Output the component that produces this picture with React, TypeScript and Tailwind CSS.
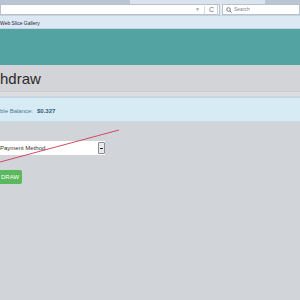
import React from 'react';

const font = { fontFamily: '"Liberation Sans", Arial, sans-serif' };

export default function App() {
  return (
    <div className="relative h-[300px] w-[300px] overflow-hidden bg-[#d1d4d8]" style={font}>
      {/* Browser chrome */}
      <div className="flex h-[4px]">
        <div className="w-[130px] bg-[#b9c5d2]" />
        <div className="flex-1 bg-[#dbe4ee]" />
        <div className="w-[35px] bg-[#b9c5d2]" />
      </div>
      <div className="flex h-[12px] border-b border-[#c7d2de] bg-[#e4ecf5]">
        <div className="flex flex-1 items-center justify-end border border-[#b8c2cc] bg-white pr-[1px]">
          <span className="text-[5px] leading-none text-[#9aa3ad]">▼</span>
          <span className="mx-[4px] h-[8px] w-px bg-[#d6dbe0]" />
          <span className="mr-[3px] text-[7px] leading-none text-[#5f7185]">C</span>
          <span className="h-[10px] w-px bg-[#c7ced6]" />
        </div>
        <div className="ml-[2px] flex w-[78px] items-center gap-[2px] border border-[#b8c2cc] bg-white pl-[3px]">
          <svg width="6" height="6" viewBox="0 0 6 6" fill="none" stroke="#6d7a88" strokeWidth="1">
            <circle cx="2.5" cy="2.5" r="1.8" />
            <path d="M3.8 3.8 L5.6 5.6" />
          </svg>
          <span className="text-[5px] leading-none text-[#7a8592]">Search</span>
        </div>
      </div>
      <div className="flex h-[13px] items-center border-b border-[#c5d3e2] bg-[#dce8f4] pt-[2px]">
        <span className="text-[5px] leading-none text-[#1e2630]">Web Slice Gallery</span>
      </div>

      {/* Site header */}
      <div className="h-[36px] bg-[#53a3a3]" />

      {/* Title */}
      <div className="flex h-[27px] items-center border-b border-[#c9cacd] bg-[#d3d4d7]">
        <h1 className="text-[15px] leading-none text-[#2b2b2b]">hdraw</h1>
      </div>
      <div className="h-[5px] border-b border-[#cfd3d7] bg-[#dcdde0]" />

      {/* Balance */}
      <div className="flex h-[25px] items-center border-t border-b border-[#c2dbe8] bg-[#d7ebf5] pt-[2px]">
        <span className="text-[6px] leading-none text-[#4a7a95]">ble Balance:</span>
        <span className="ml-[4px] text-[6px] font-bold leading-none text-[#2f5f7a]">$0.327</span>
      </div>

      {/* Form */}
      <div className="flex flex-col pt-[19px]">
        <div className="flex h-[14px] w-[105px] items-center justify-between bg-white">
          <span className="text-[6px] leading-none text-[#333]">Payment Method</span>
          <span className="flex h-[12px] w-[7px] items-center justify-center rounded-[1px] border border-[#8a8f95] bg-[#e8e9eb]">
            <span className="h-[1px] w-[3px] bg-[#222]" />
          </span>
        </div>
        <button className="mt-[15px] flex h-[14px] w-[22px] items-center rounded-r-[2px] bg-[#5cb85c] pl-[1px] text-[6px] leading-none text-white">
          DRAW
        </button>
      </div>

      {/* Annotation line */}
      <svg className="absolute left-0 top-0" width="300" height="300">
        <line x1="0" y1="162" x2="119" y2="130" stroke="#d24a62" strokeWidth="1" />
      </svg>
    </div>
  );
}
